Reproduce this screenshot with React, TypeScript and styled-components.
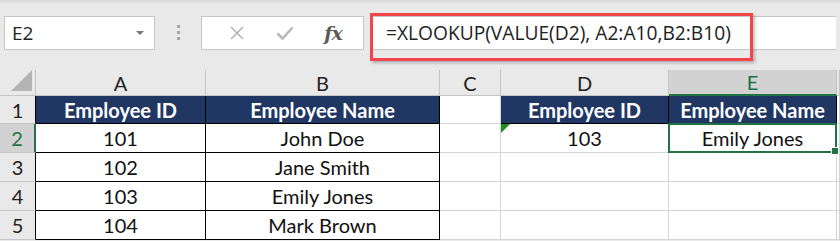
import * as React from 'react';
import styled, { createGlobalStyle } from 'styled-components';

const GlobalStyle = createGlobalStyle`
  html, body {
    margin: 0;
    padding: 0;
    background: #e9e9e9;
  }
  body {
    width: 840px;
    height: 241px;
    overflow: hidden;
  }
`;

const GREEN = '#217346';
const GRID = '#d4d4d4';
const NAVY = '#203764';

const Sheet = styled.div`
  width: 840px;
  height: 241px;
  display: flex;
  flex-direction: column;
  background: #e9e9e9;
  font-family: Lato, 'Liberation Sans', sans-serif;
`;

const TopShade = styled.div`
  height: 4px;
  background: linear-gradient(#d6d6d6, #e9e9e9);
`;

const Toolbar = styled.div`
  position: relative;
  height: 63px;
  display: flex;
  align-items: center;
  padding: 0 4px;
  box-sizing: border-box;
  padding-bottom: 6px;
`;

const NameBox = styled.div`
  width: 151px;
  height: 34px;
  box-sizing: border-box;
  background: #fff;
  border: 1px solid #c6c6c6;
  display: flex;
  align-items: center;
  justify-content: space-between;
  padding: 0 10px 0 7px;
  font-family: 'Open Sans', sans-serif;
  font-size: 19px;
  color: #222;
`;

const Caret = styled.span`
  width: 0;
  height: 0;
  border-left: 4px solid transparent;
  border-right: 4px solid transparent;
  border-top: 4px solid #777;
`;

const Dots = styled.div`
  width: 46px;
  display: flex;
  flex-direction: column;
  align-items: center;
  gap: 3px;
  span {
    width: 3px;
    height: 3px;
    background: #a8a8a8;
  }
`;

const FxButtons = styled.div`
  width: 163px;
  height: 34px;
  box-sizing: border-box;
  background: #fff;
  border: 1px solid #c6c6c6;
  display: flex;
  align-items: center;
  justify-content: space-around;
  padding: 0 6px 0 12px;
`;

const FxLabel = styled.span`
  font-family: 'DejaVu Serif', 'Liberation Serif', serif;
  font-style: italic;
  font-weight: 700;
  font-size: 19px;
  color: #5a5a5a;
  letter-spacing: -1px;
`;

const FormulaBox = styled.div`
  margin-left: 8px;
  flex: 1;
  height: 34px;
  box-sizing: border-box;
  background: #fff;
  border: 1px solid #c6c6c6;
  border-right: none;
  display: flex;
  align-items: center;
  padding-left: 13px;
  font-family: 'Open Sans', sans-serif;
  font-size: 19.2px;
  color: #222;
`;

const Highlight = styled.div`
  position: absolute;
  left: 370px;
  top: 9px;
  width: 383px;
  height: 48px;
  box-sizing: border-box;
  border: 3px solid #f2444a;
  box-shadow: 2px 2px 3px rgba(0, 0, 0, 0.25);
  pointer-events: none;
`;

const Grid = styled.div`
  display: grid;
  grid-template-columns: 36px 170px 234px 61px 168px 168px 1fr;
  grid-template-rows: 29px 28px repeat(4, 29px);
`;

const ColHead = styled.div<{ $active?: boolean }>`
  box-sizing: border-box;
  display: flex;
  align-items: flex-end;
  justify-content: center;
  font-size: 20px;
  line-height: 24px;
  color: ${p => (p.$active ? GREEN : '#222')};
  background: ${p => (p.$active ? '#d2d2d2' : '#e9e9e9')};
  border-right: 1px solid #c4c4c4;
  border-bottom: ${p => (p.$active ? `2px solid ${GREEN}` : '1px solid #c4c4c4')};
  margin-top: 3px;
`;

const Corner = styled.div`
  box-sizing: border-box;
  border-right: 1px solid #c4c4c4;
  border-bottom: 1px solid #c4c4c4;
  margin-top: 3px;
  display: flex;
  align-items: flex-end;
  justify-content: flex-end;
  padding: 0 3px 4px 0;
`;

const Triangle = styled.span`
  width: 0;
  height: 0;
  border-left: 21px solid transparent;
  border-bottom: 21px solid #b4b4b4;
`;

const RowHead = styled.div<{ $active?: boolean }>`
  box-sizing: border-box;
  display: flex;
  align-items: center;
  justify-content: center;
  font-size: 20px;
  color: ${p => (p.$active ? GREEN : '#222')};
  background: ${p => (p.$active ? '#d2d2d2' : '#e9e9e9')};
  border-bottom: 1px solid #c4c4c4;
  border-right: ${p => (p.$active ? `2px solid ${GREEN}` : '1px solid #000')};
`;

const Cell = styled.div<{ $head?: boolean; $edge?: string; $selected?: boolean }>`
  position: relative;
  box-sizing: border-box;
  display: flex;
  align-items: center;
  justify-content: center;
  font-size: 20px;
  font-weight: ${p => (p.$head ? 700 : 400)};
  color: ${p => (p.$head ? '#fff' : '#111')};
  background: ${p => (p.$head ? NAVY : '#fff')};
  border-right: 1px solid ${p => p.$edge || GRID};
  border-bottom: 1px solid ${p => p.$edge || GRID};
  ${p =>
    p.$selected &&
    `
    &::after {
      content: '';
      position: absolute;
      left: -1px;
      top: -1px;
      right: -1px;
      bottom: -1px;
      border: 2px solid ${GREEN};
    }
    &::before {
      content: '';
      position: absolute;
      right: -3px;
      bottom: -3px;
      width: 6px;
      height: 6px;
      background: ${GREEN};
      border: 1px solid #fff;
      z-index: 1;
    }
  `}
`;

const ErrorMark = styled.span`
  position: absolute;
  left: 0;
  top: 0;
  width: 0;
  height: 0;
  border-top: 9px solid #1e8c1e;
  border-right: 9px solid transparent;
`;

const people = [
  ['101', 'John Doe'],
  ['102', 'Jane Smith'],
  ['103', 'Emily Jones'],
  ['104', 'Mark Brown'],
];

export default function App() {
  return (
    <>
      <GlobalStyle />
      <Sheet>
        <TopShade />
        <Toolbar>
          <NameBox>
            E2
            <Caret />
          </NameBox>
          <Dots>
            <span />
            <span />
            <span />
          </Dots>
          <FxButtons>
            <svg width="16" height="16" viewBox="0 0 16 16">
              <path d="M2 2 L14 14 M14 2 L2 14" stroke="#b3b3b3" strokeWidth="1.6" fill="none" />
            </svg>
            <svg width="18" height="16" viewBox="0 0 18 16">
              <path d="M1.5 8.5 L6.5 13.5 L16.5 2.5" stroke="#b8b8b8" strokeWidth="2.6" fill="none" />
            </svg>
            <FxLabel>fx</FxLabel>
          </FxButtons>
          <FormulaBox>=XLOOKUP(VALUE(D2), A2:A10,B2:B10)</FormulaBox>
          <Highlight />
        </Toolbar>
        <Grid>
          <Corner>
            <Triangle />
          </Corner>
          {['A', 'B', 'C', 'D', 'E', 'F'].map(l => (
            <ColHead key={l} $active={l === 'E'}>
              {l === 'F' ? '' : l}
            </ColHead>
          ))}

          <RowHead>1</RowHead>
          <Cell $head $edge="#000">Employee ID</Cell>
          <Cell $head $edge="#000">Employee Name</Cell>
          <Cell />
          <Cell $head $edge="#000">Employee ID</Cell>
          <Cell $head $edge="#000">Employee Name</Cell>
          <Cell />

          {people.map(([id, name], i) => (
            <React.Fragment key={id}>
              <RowHead $active={i === 0}>{i + 2}</RowHead>
              <Cell $edge="#000">{id}</Cell>
              <Cell $edge="#000">{name}</Cell>
              <Cell />
              <Cell>
                {i === 0 && (
                  <>
                    <ErrorMark />
                    103
                  </>
                )}
              </Cell>
              <Cell $selected={i === 0}>{i === 0 ? 'Emily Jones' : ''}</Cell>
              <Cell />
            </React.Fragment>
          ))}
        </Grid>
      </Sheet>
    </>
  );
}
